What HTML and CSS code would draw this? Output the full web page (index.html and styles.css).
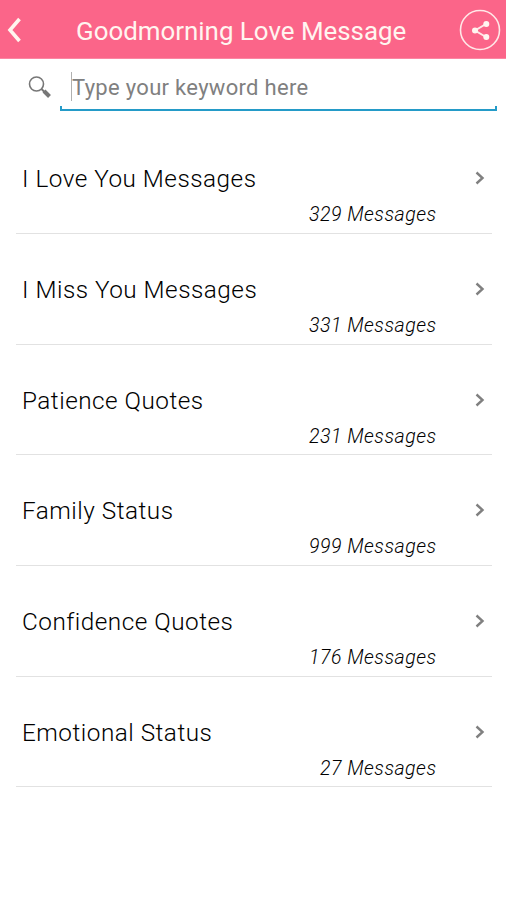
FILE: index.html
```html
<!DOCTYPE html>
<html lang="en"><head><meta charset="utf-8"><title>Goodmorning Love Message</title><link rel="stylesheet" href="styles.css"></head>
<body>
<header class="bar">
<svg class="back" width="18" height="28" viewBox="0 0 18 28"><path d="M14.500 3 5 14l9.500 11"/></svg>
<h1><span>Goodmorning Love Message</span></h1>
<svg class="share" width="42" height="42" viewBox="0 0 42 42"><circle class="ring" cx="21" cy="21" r="19.500"/><path class="link" d="M27 15 16 21.500l11 6.500"/><circle cx="27.300" cy="15" r="3"/><circle cx="16" cy="21.500" r="3"/><circle cx="27.300" cy="28" r="3"/></svg>
</header>
<div class="search">
<svg class="lens" width="24" height="24" viewBox="0 0 24 24"><circle cx="8.500" cy="8" r="7"/><path class="neck" d="m13.500 13 3 3"/><path class="grip" d="m16 15 5.500 5.500"/></svg>
<div class="field"><span>Type your keyword here</span></div>
</div>
<main class="list">
<section class="item"><h2><span>I Love You Messages</span></h2><svg class="chev" width="10" height="14" viewBox="0 0 10 14"><path d="m1.500 1.500 6 5.500-6 5.500"/></svg><p><span>329 Messages</span></p></section>
<section class="item"><h2><span>I Miss You Messages</span></h2><svg class="chev" width="10" height="14" viewBox="0 0 10 14"><path d="m1.500 1.500 6 5.500-6 5.500"/></svg><p><span>331 Messages</span></p></section>
<section class="item"><h2><span>Patience Quotes</span></h2><svg class="chev" width="10" height="14" viewBox="0 0 10 14"><path d="m1.500 1.500 6 5.500-6 5.500"/></svg><p><span>231 Messages</span></p></section>
<section class="item"><h2><span>Family Status</span></h2><svg class="chev" width="10" height="14" viewBox="0 0 10 14"><path d="m1.500 1.500 6 5.500-6 5.500"/></svg><p><span>999 Messages</span></p></section>
<section class="item"><h2><span>Confidence Quotes</span></h2><svg class="chev" width="10" height="14" viewBox="0 0 10 14"><path d="m1.500 1.500 6 5.500-6 5.500"/></svg><p><span>176 Messages</span></p></section>
<section class="item"><h2><span>Emotional Status</span></h2><svg class="chev" width="10" height="14" viewBox="0 0 10 14"><path d="m1.500 1.500 6 5.500-6 5.500"/></svg><p><span>27 Messages</span></p></section>
</main>
</body></html>
```
FILE: styles.css
```css
* { box-sizing: border-box; }
body { margin: 0; min-height: 900px; background: #fff; font-family: Roboto, "Liberation Sans", sans-serif; }
svg { display: block; fill: none; }
h1, h2, p { margin: 0; font-weight: 400; white-space: nowrap; }
.bar { height: 59px; background: #fb6589; border-bottom: 1px solid #fc86a2; color: #fff; display: grid; grid-template-columns: 76px 1fr 42px; padding-right: 5px; padding-top: 1px; align-items: center; }
.back { margin-left: 5px; stroke: #fff5ee; stroke-width: 3.6; }
h1 { font-size: 25.9px; line-height: 32px; padding-top: 3px; color: #fff5f0; }
.share { stroke: #ffe8e8; stroke-width: 1.6; }
.share circle:not(.ring) { fill: #fff5f0; stroke: none; }
.share .link { stroke-width: 2; }
.search { display: flex; height: 53px; padding: 17px 9px 0 28px; }
.lens { stroke: #777; stroke-width: 1.6; margin-right: 8px; }
.lens .neck { stroke-width: 2; }
.lens .grip { stroke-width: 4; }
.field { position: relative; width: 437px; height: 35px; border-bottom: 2px solid #249bc8; font-size: 22px; padding-left: 12px; letter-spacing: .3px; line-height: 24px; color: #808080; }
.field::before { content: ""; position: absolute; left: 0; right: 0; bottom: 0; height: 3px; border: solid #249bc8; border-width: 0 2px; }
.field::after { content: ""; position: absolute; left: 11px; top: -4px; width: 1px; height: 29px; background: #b0b0b0; }
.list { padding: 11.3px 14px 0 16px; }
.item { height: 110.7px; border-bottom: 1px solid #e2e2e2; display: grid; grid-template-columns: 1fr 10px; grid-template-rows: 71px 1fr; padding: 0 7px 0 6px; }
h2 { align-self: end; font-size: 24.3px; font-weight: 300; letter-spacing: .5px; line-height: 28px; padding-bottom: 1px; color: #000; }
.chev { align-self: end; margin-bottom: 9px; stroke: #808080; stroke-width: 2.4; }
p { width: 414.500px; text-align: right; font-size: 19.5px; font-weight: 300; letter-spacing: .5px; line-height: 24px; font-style: italic; color: #000; padding-top: 9px; }
```
